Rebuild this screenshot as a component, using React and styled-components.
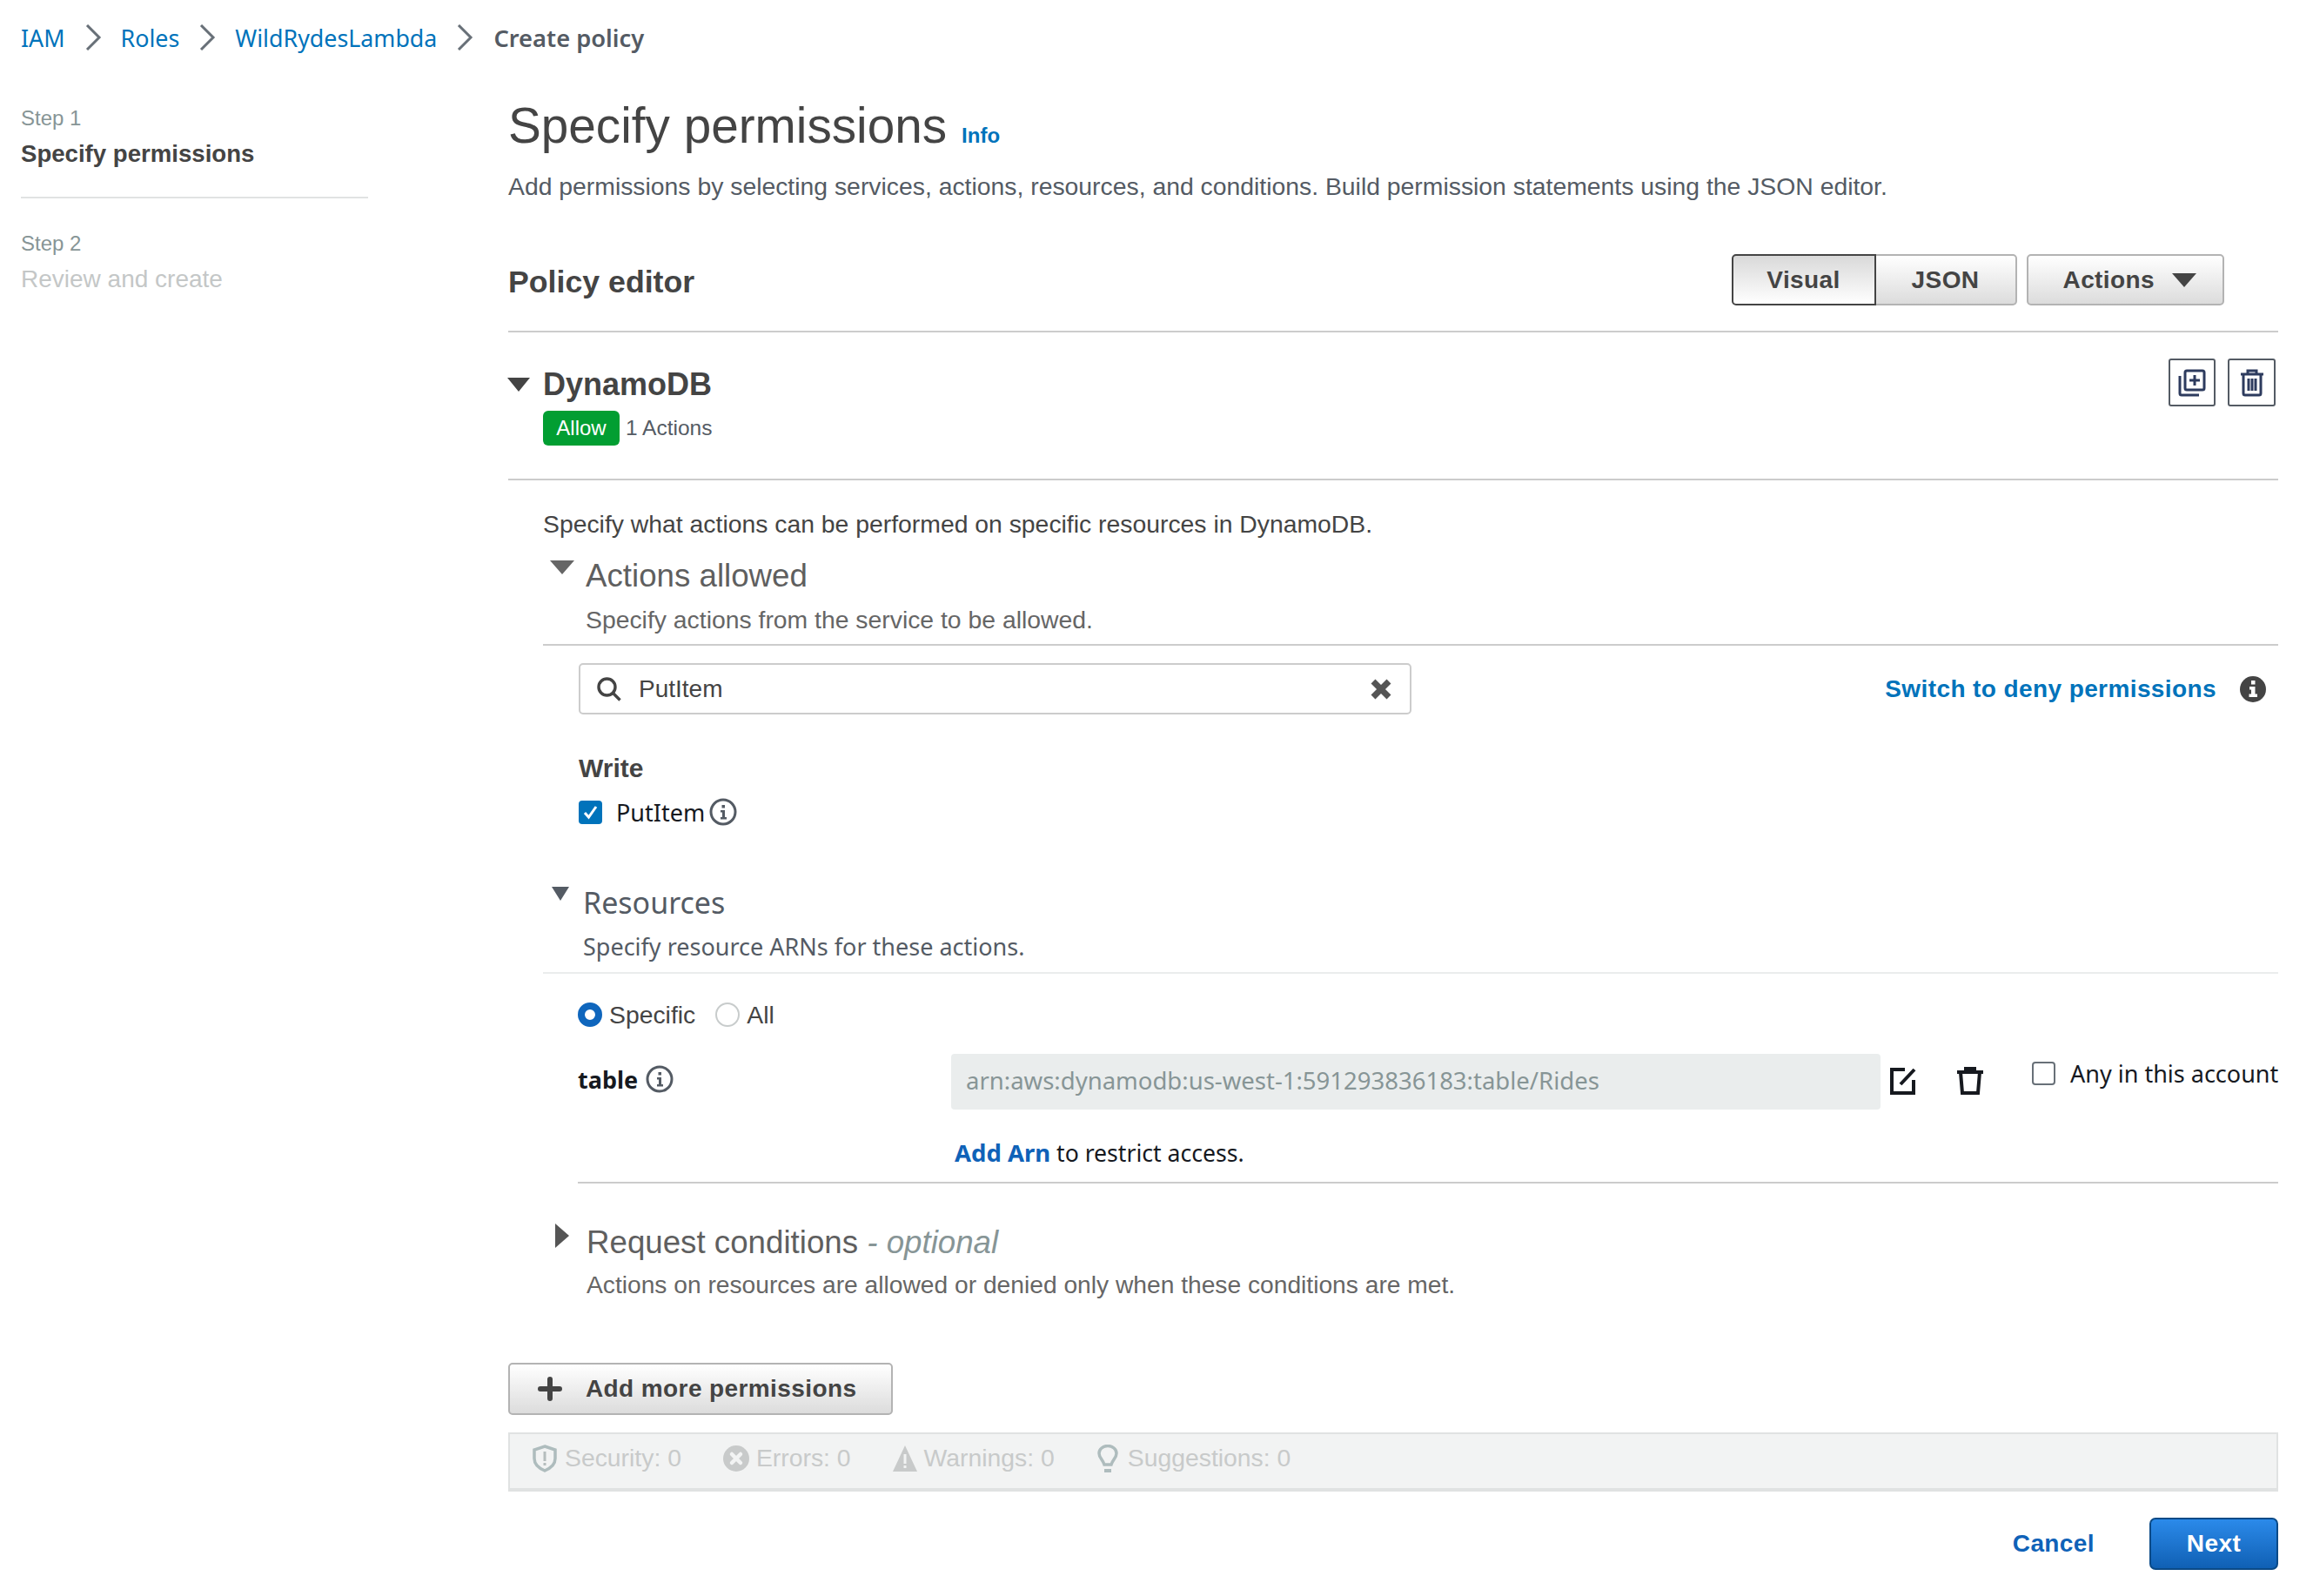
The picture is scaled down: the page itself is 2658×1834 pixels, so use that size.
import React from 'react';
import styled, { createGlobalStyle } from 'styled-components';

const GlobalStyle = createGlobalStyle`
  html, body {
    margin: 0;
    padding: 0;
    background: #fff;
    font-family: "Liberation Sans", Arial, sans-serif;
    font-size: 28.35px;
    color: #444;
  }
`;

const NOTO = '"Noto Sans", "Liberation Sans", sans-serif';

const Breadcrumbs = styled.nav`
  display: flex;
  align-items: center;
  box-sizing: border-box;
  height: 88px;
  padding: 0 0 2px 24px;
  font-family: ${NOTO};
  font-size: 26.8px;
`;

const Crumb = styled.a`
  margin-left: ${p => (p.$current ? '1px' : 0)};
  font-size: ${p => (p.$current ? '27.3px' : 'inherit')};
  color: ${p => (p.$current ? '#545b64' : '#0073bb')};
  font-weight: ${p => (p.$current ? 600 : 400)};
`;

const CrumbArrow = styled.svg`
  width: 22px;
  height: 30px;
  margin: 0 21px;
  fill: none;
  stroke: #687078;
  stroke-width: 3;
`;

const Layout = styled.div`
  display: grid;
  grid-template-columns: 560px 2034px;
  padding-left: 24px;
`;

const Sidebar = styled.aside`
  width: 399px;
  padding-top: 28px;
`;

const StepLabel = styled.div`
  height: 41px;
  line-height: 40px;
  font-size: 24px;
  color: #879596;
`;

const StepName = styled.div`
  height: 40px;
  line-height: 40px;
  margin-bottom: ${p => (p.$divider ? '29px' : 0)};
  font-size: ${p => (p.$active ? '27.6px' : '28px')};
  font-weight: ${p => (p.$active ? 700 : 400)};
  color: ${p => (p.$active ? '#444' : '#c4c7c7')};
`;

const StepDivider = styled.div`
  height: 2px;
  background: #e1e3e3;
  margin-bottom: 32px;
`;

const Main = styled.main`
  width: 2034px;
`;

const TitleRow = styled.div`
  display: flex;
  align-items: baseline;
  gap: 17px;
  height: 70px;
  margin-top: 22px;
  line-height: 70px;
`;

const Title = styled.h1`
  margin: 0;
  font-size: 56.7px;
  font-weight: 400;
  color: #444;
`;

const InfoLink = styled.a`
  font-size: 24px;
  font-weight: 700;
  color: #0073bb;
`;

const Subtitle = styled.p`
  margin: 0;
  height: 68px;
  line-height: 69px;
  color: #545b64;
`;

const EditorHead = styled.div`
  display: flex;
  justify-content: space-between;
  align-items: center;
  padding: 44px 62px 29px 0;
  border-bottom: 2px solid #ccc;
`;

const EditorTitle = styled.h2`
  margin: 5px 0 0;
  font-size: 35.7px;
  font-weight: 700;
  color: #444;
`;

const EditorTools = styled.div`
  display: flex;
  gap: 11px;
`;

const Segmented = styled.div`
  display: flex;
`;

const GreyButton = styled.button`
  display: flex;
  align-items: center;
  justify-content: center;
  gap: 20px;
  height: 59px;
  padding: 0 30px 0 40px;
  border: 2px solid #b3b3b3;
  border-radius: 5px;
  background: linear-gradient(#fff, #dcdcdc);
  font-family: "Liberation Sans", Arial, sans-serif;
  font-size: 28px;
  font-weight: 700;
  letter-spacing: 0.4px;
  color: #444;
`;

const SegmentLeft = styled(GreyButton)`
  width: 166px;
  padding: 0;
  border-color: #444;
  border-radius: 5px 0 0 5px;
  background: linear-gradient(#d9d9d9, #fff);
`;

const SegmentRight = styled(GreyButton)`
  width: 162px;
  padding: 0;
  border-left: 0;
  border-radius: 0 5px 5px 0;
`;

const Tri = styled.span`
  display: inline-block;
  flex: none;
  width: 0;
  height: 0;
  ${p =>
    p.$right
      ? `border-top: ${p.$h / 2}px solid transparent; border-bottom: ${p.$h / 2}px solid transparent; border-left: ${p.$w}px solid ${p.$color || '#555'};`
      : `border-left: ${p.$w / 2}px solid transparent; border-right: ${p.$w / 2}px solid transparent; border-top: ${p.$h}px solid ${p.$color || '#444'};`}
`;

const StatementHead = styled.div`
  display: flex;
  justify-content: space-between;
  padding: 30px 3px 38px 0;
  border-bottom: 2px solid #ccc;
`;

const StatementTitleRow = styled.div`
  display: flex;
  align-items: center;
  box-sizing: border-box;
  height: 58px;
  padding-top: 1px;
`;

const TitleArrow = styled.span`
  display: flex;
  width: 40px;
  margin-left: -1px;
  margin-right: 1px;
`;

const ServiceName = styled.h3`
  margin: 0;
  font-size: 36px;
  font-weight: 700;
  color: #444;
`;

const BadgeRow = styled.div`
  display: flex;
  align-items: center;
  gap: 7px;
  height: 40px;
  margin: 2px 0 0 40px;
  font-size: 24.5px;
  color: #545b64;
`;

const AllowBadge = styled.span`
  display: flex;
  align-items: center;
  justify-content: center;
  width: 88px;
  height: 40px;
  border-radius: 6px;
  background: #029e32;
  font-size: 24px;
  color: #fff;
`;

const IconButtons = styled.div`
  display: flex;
  gap: 14px;
`;

const IconButton = styled.button`
  display: flex;
  align-items: center;
  justify-content: center;
  width: ${p => p.$w}px;
  height: 55px;
  padding: 0;
  border: 2px solid #545b64;
  border-radius: 3px;
  background: #fff;
`;

const Body = styled.div`
  padding-left: 40px;
`;

const Lead = styled.p`
  margin: 30px 0 0;
  height: 40px;
  line-height: 40px;
  color: #444;
`;

const SectionHead = styled.div`
  display: flex;
  height: 42px;
  margin-top: ${p => p.$top}px;
  padding-left: ${p => p.$left}px;
`;

const SectionArrow = styled.span`
  display: flex;
  width: ${p => p.$w}px;
  padding-top: ${p => p.$top}px;
`;

const SectionTitle = styled.h4`
  margin: 0;
  line-height: 43px;
  font-family: ${p => (p.$noto ? NOTO : 'inherit')};
  font-size: ${p => (p.$noto ? '34px' : '36.7px')};
  font-weight: 400;
  color: ${p => (p.$noto ? '#545b64' : '#5f5f5f')};
`;

const Optional = styled.em`
  color: #879596;
`;

const SectionText = styled.p`
  margin: ${p => p.$top}px 0 0;
  height: 40px;
  padding-left: ${p => p.$left}px;
  line-height: 40px;
  font-family: ${p => (p.$noto ? NOTO : 'inherit')};
  font-size: ${p => p.$size || 'inherit'};
  color: ${p => (p.$noto ? '#545b64' : '#666')};
`;

const Rule = styled.hr`
  margin: ${p => p.$top}px 0 0 ${p => p.$left || 0}px;
  height: 2px;
  border: 0;
  background: ${p => p.$color || '#ccc'};
`;

const SearchRow = styled.div`
  display: flex;
  justify-content: space-between;
  align-items: center;
  margin-top: 20px;
  padding: 0 14px 0 41px;
`;

const SearchBox = styled.div`
  display: flex;
  align-items: center;
  box-sizing: border-box;
  width: 957px;
  height: 59px;
  padding: 0 21px 0 19px;
  border: 2px solid #ccc;
  border-radius: 5px;
`;

const SearchValue = styled.span`
  flex: 1;
  margin-left: 20px;
  font-size: 28px;
  color: #444;
`;

const SwitchWrap = styled.div`
  display: flex;
  align-items: center;
  gap: 27px;
`;

const SwitchLink = styled.a`
  font-size: 28px;
  font-weight: 700;
  letter-spacing: 0.4px;
  color: #0073bb;
`;

const GroupLabel = styled.div`
  height: 40px;
  margin: 42px 0 0 41px;
  line-height: 40px;
  font-size: 30px;
  font-weight: 700;
  color: #444;
`;

const CheckRow = styled.div`
  display: flex;
  align-items: center;
  height: 40px;
  margin: 10px 0 0 41px;
`;

const CheckBox = styled.span`
  display: flex;
  flex: none;
  align-items: center;
  justify-content: center;
  box-sizing: border-box;
  width: 27px;
  height: 27px;
  border: ${p => (p.$checked ? '0' : '2px solid #687078')};
  border-radius: 4px;
  background: ${p => (p.$checked ? '#0073bb' : '#fff')};
`;

const NotoLabel = styled.span`
  margin: ${p => p.$margin || 0};
  font-family: ${NOTO};
  font-size: 27px;
  font-weight: ${p => (p.$bold ? 700 : 400)};
  color: #16191f;
`;

const RadioRow = styled.div`
  display: flex;
  align-items: center;
  height: 40px;
  margin: 27px 0 0 40px;
`;

const Radio = styled.span`
  box-sizing: border-box;
  width: 28px;
  height: 28px;
  margin-right: 8px;
  border-radius: 50%;
  border: ${p => (p.$on ? '8px solid #0f66bd' : '2px solid #c8cccc')};
  background: #fff;
`;

const RadioLabel = styled.span`
  margin-right: ${p => p.$gap || 0}px;
  color: #444;
`;

const TableRow = styled.div`
  display: flex;
  margin: 25px 0 0 40px;
`;

const TableLabel = styled.div`
  display: flex;
  flex: none;
  align-items: center;
  gap: 9px;
  width: 429px;
  height: 58px;
`;

const ArnBox = styled.div`
  flex: none;
  box-sizing: border-box;
  width: 1068px;
  height: 64px;
  padding-left: 17px;
  border-radius: 4px;
  background: #eaeded;
  line-height: 62px;
  font-family: ${NOTO};
  font-size: 27.5px;
  color: #879596;
  white-space: nowrap;
`;

const RowIcon = styled.span`
  display: flex;
  flex: none;
  align-items: center;
  height: 62px;
  margin-left: ${p => p.$left}px;
`;

const AnyAccount = styled.label`
  display: flex;
  flex: none;
  align-items: center;
  gap: 17px;
  height: 44px;
  margin-left: 55px;
  white-space: nowrap;
`;

const ArnHint = styled.div`
  height: 40px;
  margin: 30px 0 0 473px;
  line-height: 40px;
  font-family: ${NOTO};
  font-size: 26.6px;
  color: #16191f;
`;

const ArnLink = styled.a`
  font-size: 27.5px;
  font-weight: 700;
  color: #0f62b8;
`;

const AddButton = styled(GreyButton)`
  justify-content: flex-start;
  gap: 27px;
  box-sizing: border-box;
  width: 442px;
  height: 60px;
  margin-top: 70px;
  padding: 0 0 0 32px;
`;

const StatusBar = styled.div`
  display: flex;
  align-items: center;
  box-sizing: border-box;
  height: 68px;
  margin-top: 20px;
  padding: 0 0 7px 25px;
  border: 2px solid #e0e2e2;
  border-bottom-width: 4px;
  background: #f2f3f3;
  color: #c8caca;
`;

const StatusItem = styled.span`
  display: flex;
  align-items: center;
  gap: 8px;
  margin-right: 48px;
  &:last-child {
    gap: 10px;
  }
`;

const Footer = styled.footer`
  display: flex;
  justify-content: flex-end;
  align-items: center;
  gap: 63px;
  margin-top: 30px;
`;

const CancelLink = styled.a`
  font-size: 28px;
  font-weight: 700;
  letter-spacing: 0.4px;
  color: #0f62b8;
`;

const NextButton = styled.button`
  width: 148px;
  height: 60px;
  padding: 0;
  border: 2px solid #0a4a87;
  border-radius: 7px;
  background: linear-gradient(#2b8aea, #1060b4);
  font-family: "Liberation Sans", Arial, sans-serif;
  font-size: 28px;
  font-weight: 700;
  letter-spacing: 0.4px;
  color: #fff;
`;

const Chevron = () => (
  <CrumbArrow viewBox="0 0 22 30">
    <path d="M4 1l14 14L4 29" />
  </CrumbArrow>
);

const CopyPlusIcon = () => (
  <svg width="32" height="32" viewBox="0 0 32 32" fill="none" stroke="#2d3b5e" strokeWidth="3">
    <rect x="8" y="2" width="22" height="22" rx="2" />
    <path d="M2 8v20a2 2 0 0 0 2 2h20M19 7v12M13 13h12" />
  </svg>
);

const BinIcon = () => (
  <svg width="28" height="32" viewBox="0 0 28 32" fill="none" stroke="#2d3b5e" strokeWidth="3">
    <path d="M1 6h26M9 6V2h10v4M4 6v22a2 2 0 0 0 2 2h16a2 2 0 0 0 2-2V6M10 11v14M14 11v14M18 11v14" />
  </svg>
);

const SearchIcon = () => (
  <svg width="28" height="28" viewBox="0 0 28 28" fill="none" stroke="#444" strokeWidth="3.4">
    <circle cx="11.5" cy="11.5" r="9.5" />
    <path d="M18.5 18.5l8 8" />
  </svg>
);

const ClearIcon = () => (
  <svg width="24" height="24" viewBox="0 0 24 24" fill="none" stroke="#555" strokeWidth="7">
    <path d="M3 3l18 18M21 3L3 21" />
  </svg>
);

const FilledInfo = () => (
  <svg width="30" height="30" viewBox="0 0 30 30">
    <circle cx="15" cy="15" r="15" fill="#444" />
    <path d="M13 5h4.5v4.5H13zM11 12h6.5v8.5H20V24H10.5v-3.5H13V15.500h-2z" fill="#fff" />
  </svg>
);

const OutlineInfo = () => (
  <svg width="32" height="32" viewBox="0 0 32 32">
    <circle cx="16" cy="16" r="14" fill="#fff" stroke="#545b64" strokeWidth="3" />
    <path d="M14.500 8h3.500v3.500h-3.500zM13 14h5v8h2v2.500h-7V22h2v-5.500h-2z" fill="#545b64" />
  </svg>
);

const TickIcon = () => (
  <svg width="19" height="19" viewBox="0 0 19 19" fill="none" stroke="#fff" strokeWidth="3">
    <path d="M3 10l4.500 5L16 3" />
  </svg>
);

const EditIcon = () => (
  <svg width="30" height="32" viewBox="0 0 30 32" fill="none" stroke="#16191f" strokeWidth="4">
    <path d="M17 3H2v27h25V15M12 20L28 3" />
  </svg>
);

const TrashIcon = () => (
  <svg width="32" height="32" viewBox="0 0 32 32" fill="none" stroke="#16191f" strokeWidth="4">
    <path d="M1 6h30M11 6V2h10v4M5 6l2 24h18l2-24" />
  </svg>
);

const PlusIcon = () => (
  <svg width="28" height="28" viewBox="0 0 28 28" fill="none" stroke="#444" strokeWidth="6" strokeLinecap="round">
    <path d="M14 3v22M3 14h22" />
  </svg>
);

const ShieldIcon = () => (
  <svg width="30" height="32" viewBox="0 0 30 32">
    <path d="M15 2l12 4v10c0 7-5 11-12 14C8 27 3 23 3 16V6z" fill="none" stroke="#aebcbd" strokeWidth="3.500" />
    <path d="M13.500 8h3v11h-3zM13.500 21h3v3h-3z" fill="#b5bdbd" />
  </svg>
);

const ErrorIcon = () => (
  <svg width="30" height="30" viewBox="0 0 30 30">
    <circle cx="15" cy="15" r="15" fill="#c8caca" />
    <path d="M10 10l10 10M20 10L10 20" stroke="#f2f3f3" strokeWidth="4.500" strokeLinecap="round" />
  </svg>
);

const WarningIcon = () => (
  <svg width="28" height="30" viewBox="0 0 28 30">
    <path d="M14 0l14 30H0z" fill="#c8caca" />
    <path d="M12.500 10h3v11h-3zM12.500 23h3v3h-3z" fill="#f2f3f3" />
  </svg>
);

const BulbIcon = () => (
  <svg width="26" height="32" viewBox="0 0 26 32" fill="none" stroke="#aebcbd" strokeWidth="3.500">
    <path d="M9 23C7 17 3 15 3 10a10 8.500 0 0 1 20 0c0 5-4 7-6 13z" />
    <path d="M9 30h8" strokeWidth="4" />
  </svg>
);

export default function App() {
  return (
    <>
      <GlobalStyle />
      <Breadcrumbs>
        <Crumb>IAM</Crumb>
        <Chevron />
        <Crumb>Roles</Crumb>
        <Chevron />
        <Crumb>WildRydesLambda</Crumb>
        <Chevron />
        <Crumb $current>Create policy</Crumb>
      </Breadcrumbs>
      <Layout>
        <Sidebar>
          <StepLabel>Step 1</StepLabel>
          <StepName $active $divider>Specify permissions</StepName>
          <StepDivider />
          <StepLabel>Step 2</StepLabel>
          <StepName>Review and create</StepName>
        </Sidebar>
        <Main>
          <TitleRow>
            <Title>Specify permissions</Title>
            <InfoLink>Info</InfoLink>
          </TitleRow>
          <Subtitle>
            Add permissions by selecting services, actions, resources, and conditions. Build permission statements using the JSON editor.
          </Subtitle>
          <EditorHead>
            <EditorTitle>Policy editor</EditorTitle>
            <EditorTools>
              <Segmented>
                <SegmentLeft>Visual</SegmentLeft>
                <SegmentRight>JSON</SegmentRight>
              </Segmented>
              <GreyButton>
                Actions
                <Tri $w={28} $h={16} />
              </GreyButton>
            </EditorTools>
          </EditorHead>

          <StatementHead>
            <div>
              <StatementTitleRow>
                <TitleArrow><Tri $w={26} $h={16} /></TitleArrow>
                <ServiceName>DynamoDB</ServiceName>
              </StatementTitleRow>
              <BadgeRow>
                <AllowBadge>Allow</AllowBadge>
                1 Actions
              </BadgeRow>
            </div>
            <IconButtons>
              <IconButton $w={54}><CopyPlusIcon /></IconButton>
              <IconButton $w={55}><BinIcon /></IconButton>
            </IconButtons>
          </StatementHead>

          <Body>
            <Lead>Specify what actions can be performed on specific resources in DynamoDB.</Lead>

            <SectionHead $top={18} $left={8}>
              <SectionArrow $w={41} $top={4}><Tri $w={28} $h={16} $color="#666" /></SectionArrow>
              <SectionTitle>Actions allowed</SectionTitle>
            </SectionHead>
            <SectionText $top={10} $left={49}>Specify actions from the service to be allowed.</SectionText>
            <Rule $top={8} />

            <SearchRow>
              <SearchBox>
                <SearchIcon />
                <SearchValue>PutItem</SearchValue>
                <ClearIcon />
              </SearchBox>
              <SwitchWrap>
                <SwitchLink>Switch to deny permissions</SwitchLink>
                <FilledInfo />
              </SwitchWrap>
            </SearchRow>

            <GroupLabel>Write</GroupLabel>
            <CheckRow>
              <CheckBox $checked><TickIcon /></CheckBox>
              <NotoLabel $margin="0 5px 0 16px">PutItem</NotoLabel>
              <OutlineInfo />
            </CheckRow>

            <SectionHead $top={63} $left={10}>
              <SectionArrow $w={36} $top={3}><Tri $w={20} $h={16} $color="#545b64" /></SectionArrow>
              <SectionTitle $noto>Resources</SectionTitle>
            </SectionHead>
            <SectionText $top={10} $left={46} $noto $size="27px">Specify resource ARNs for these actions.</SectionText>
            <Rule $top={9} $color="#eaeded" />

            <RadioRow>
              <Radio $on />
              <RadioLabel $gap={23}>Specific</RadioLabel>
              <Radio />
              <RadioLabel>All</RadioLabel>
            </RadioRow>

            <TableRow>
              <TableLabel>
                <NotoLabel $bold>table</NotoLabel>
                <OutlineInfo />
              </TableLabel>
              <ArnBox>arn:aws:dynamodb:us-west-1:591293836183:table/Rides</ArnBox>
              <RowIcon $left={11}><EditIcon /></RowIcon>
              <RowIcon $left={46}><TrashIcon /></RowIcon>
              <AnyAccount>
                <CheckBox />
                <NotoLabel>Any in this account</NotoLabel>
              </AnyAccount>
            </TableRow>

            <ArnHint><ArnLink>Add Arn</ArnLink> to restrict access.</ArnHint>
            <Rule $top={13} $left={40} />

            <SectionHead $top={46} $left={14}>
              <SectionArrow $w={36} $top={-3}><Tri $right $w={16} $h={28} /></SectionArrow>
              <SectionTitle>Request conditions <Optional>- optional</Optional></SectionTitle>
            </SectionHead>
            <SectionText $top={8} $left={50} $size="28.2px">Actions on resources are allowed or denied only when these conditions are met.</SectionText>
          </Body>

          <AddButton>
            <PlusIcon />
            Add more permissions
          </AddButton>

          <StatusBar>
            <StatusItem><ShieldIcon />Security: 0</StatusItem>
            <StatusItem><ErrorIcon />Errors: 0</StatusItem>
            <StatusItem><WarningIcon />Warnings: 0</StatusItem>
            <StatusItem><BulbIcon />Suggestions: 0</StatusItem>
          </StatusBar>

          <Footer>
            <CancelLink>Cancel</CancelLink>
            <NextButton>Next</NextButton>
          </Footer>
        </Main>
      </Layout>
    </>
  );
}
